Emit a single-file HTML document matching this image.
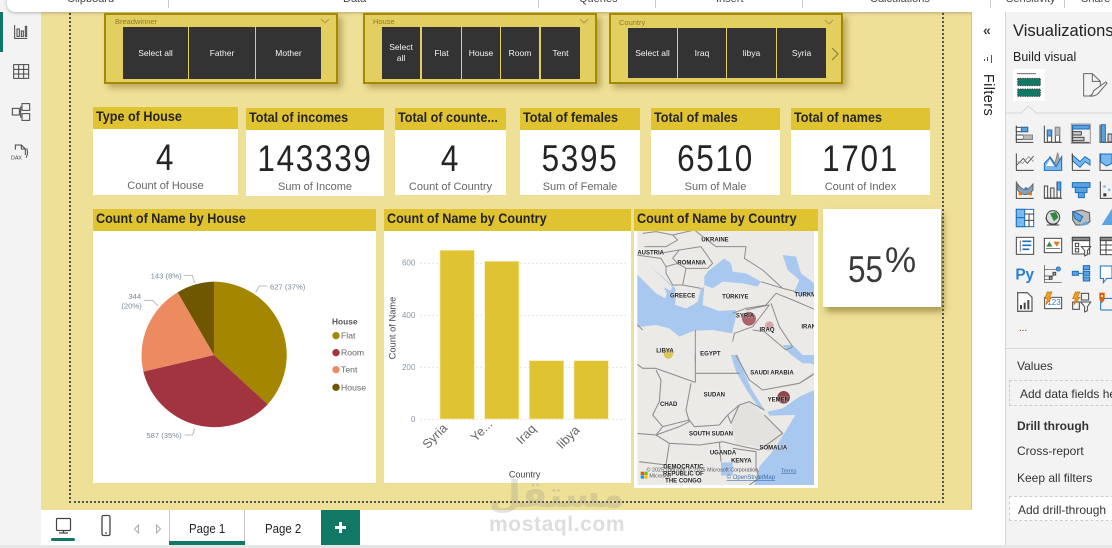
<!DOCTYPE html>
<html><head><meta charset="utf-8"><style>
html,body{margin:0;padding:0}
body{width:1112px;height:548px;overflow:hidden;position:relative;background:#fff;font-family:"Liberation Sans",sans-serif;color:#252423}
div,span,svg{position:absolute}
.t{white-space:nowrap}
.sl{background:#e3cf5f;border:2px solid #a58a00;box-sizing:border-box;box-shadow:4px 4px 6px rgba(120,100,30,.45)}
.st{font-size:7.5px;color:#8a7a30}
.b{background:#333;color:#f4f4f4;font-size:8.5px;display:flex;align-items:center;justify-content:center;text-align:center;line-height:11px;box-sizing:border-box}
.ch{background:#e0c331}
.ct{font-size:14px;font-weight:bold;left:3px;top:1px;white-space:nowrap;color:#252423;transform:scaleX(.9);transform-origin:0 50%}
.cb{background:#fff}
.v{font-size:37px;left:0;right:0;text-align:center;top:30px;color:#252423;letter-spacing:2px;line-height:42px;transform:scaleX(.85)}
.l{font-size:11px;left:0;right:0;text-align:center;color:#666;top:73px;line-height:13px;white-space:nowrap}
.p{font-size:12px;color:#333;white-space:nowrap}
</style></head><body>

<!-- canvas -->
<div style="left:41px;top:0;width:931px;height:510px;background:#efe097"></div>
<div style="left:69px;top:0;width:871px;height:501px;border:dotted #555;border-width:0 2px 2px 2px;box-sizing:content-box"></div>

<!-- left rail -->
<div style="left:0;top:0;width:41px;height:545px;background:#f3f3f3"></div>
<div style="left:0;top:12px;width:3px;height:40px;background:#117865"></div>
<svg style="left:0;top:15px" width="40" height="150" viewBox="0 0 120 450" fill="none" stroke="#444" stroke-width="3">
<path d="M44 30V70H82M51 42V64H58V42ZM64 48V64H70V48ZM76 34V64H80V34Z"/>
<path d="M41 149H86V190H41ZM41 163H86M41 177H86M56 149V190M71 149V190"/>
<path d="M37 280H58V300H37ZM66 266H89V286H66ZM66 296H89V316H66ZM58 290H62V276H66M62 290V306H66"/>
<path d="M46 404V390H64L76 402V420M64 390V402H76M80 400Q86 415 78 428"/>
<text x="33" y="434" font-size="16" stroke="none" fill="#444" font-family="Liberation Sans">DAX</text>
</svg>

<!-- ribbon -->
<div style="left:7px;top:-10px;width:1115px;height:22px;background:#fff;border-radius:8px;box-shadow:0 1px 3px rgba(0,0,0,.25)"></div>
<div class="t" style="left:67px;top:-7px;font-size:11px;line-height:13px;color:#444">Clipboard</div>
<div class="t" style="left:343px;top:-7px;font-size:11px;line-height:13px;color:#444">Data</div>
<div class="t" style="left:579px;top:-7px;font-size:11px;line-height:13px;color:#444">Queries</div>
<div class="t" style="left:716px;top:-7px;font-size:11px;line-height:13px;color:#444">Insert</div>
<div class="t" style="left:870px;top:-7px;font-size:11px;line-height:13px;color:#444">Calculations</div>
<div class="t" style="left:1006px;top:-7px;font-size:11px;line-height:13px;color:#444">Sensitivity</div>
<div class="t" style="left:1081px;top:-7px;font-size:11px;line-height:13px;color:#444">Share</div>
<div style="left:168px;top:0;width:1px;height:8px;background:#ccc"></div>
<div style="left:538px;top:0;width:1px;height:8px;background:#ccc"></div>
<div style="left:655px;top:0;width:1px;height:8px;background:#ccc"></div>
<div style="left:802px;top:0;width:1px;height:8px;background:#ccc"></div>
<div style="left:990px;top:0;width:1px;height:8px;background:#ccc"></div>
<div style="left:1064px;top:0;width:1px;height:8px;background:#ccc"></div>

<!-- slicers -->
<div class="sl" style="left:104px;top:13px;width:234px;height:71px"></div>
<div class="t st" style="left:115px;top:17px">Breadwinner</div>
<svg style="left:320px;top:18px" width="10" height="6" fill="none" stroke="#a99a50"><path d="M1 1L5 5L9 1"/></svg>
<div class="b" style="left:123px;top:27px;width:65px;height:52px">Select all</div>
<div class="b" style="left:189px;top:27px;width:66px;height:52px">Father</div>
<div class="b" style="left:256px;top:27px;width:65px;height:52px">Mother</div>

<div class="sl" style="left:363px;top:13px;width:234px;height:71px"></div>
<div class="t st" style="left:373px;top:17px">House</div>
<svg style="left:579px;top:18px" width="10" height="6" fill="none" stroke="#a99a50"><path d="M1 1L5 5L9 1"/></svg>
<div class="b" style="left:382px;top:27px;width:38px;height:52px">Select<br>all</div>
<div class="b" style="left:422px;top:27px;width:39px;height:52px">Flat</div>
<div class="b" style="left:462px;top:27px;width:38px;height:52px">House</div>
<div class="b" style="left:501px;top:27px;width:38px;height:52px">Room</div>
<div class="b" style="left:541px;top:27px;width:39px;height:52px">Tent</div>

<div class="sl" style="left:609px;top:13px;width:234px;height:71px"></div>
<div class="t st" style="left:619px;top:18px">Country</div>
<svg style="left:824px;top:19px" width="10" height="6" fill="none" stroke="#a99a50"><path d="M1 1L5 5L9 1"/></svg>
<div class="b" style="left:628px;top:28px;width:49px;height:50px">Select all</div>
<div class="b" style="left:678px;top:28px;width:48px;height:50px">Iraq</div>
<div class="b" style="left:727px;top:28px;width:49px;height:50px">libya</div>
<div class="b" style="left:777px;top:28px;width:49px;height:50px">Syria</div>
<svg style="left:830px;top:47px" width="10" height="14" fill="none" stroke="#8f8240" stroke-width="1.2"><path d="M2 1L8 7L2 13"/></svg>

<!-- cards -->
<div class="cb" style="left:93px;top:107px;width:145px;height:88px"><div class="ch" style="left:0;top:0;right:0;height:22px"><div class="ct">Type of House</div></div><div class="v">4</div><div class="l">Count of House</div></div>
<div class="cb" style="left:246px;top:108px;width:138px;height:88px"><div class="ch" style="left:0;top:0;right:0;height:22px"><div class="ct">Total of incomes</div></div><div class="v">143339</div><div class="l">Sum of Income</div></div>
<div class="cb" style="left:395px;top:108px;width:111px;height:87px"><div class="ch" style="left:0;top:0;right:0;height:22px"><div class="ct">Total of counte...</div></div><div class="v">4</div><div class="l">Count of Country</div></div>
<div class="cb" style="left:520px;top:108px;width:120px;height:87px"><div class="ch" style="left:0;top:0;right:0;height:22px"><div class="ct">Total of females</div></div><div class="v">5395</div><div class="l">Sum of Female</div></div>
<div class="cb" style="left:651px;top:108px;width:129px;height:87px"><div class="ch" style="left:0;top:0;right:0;height:22px"><div class="ct">Total of males</div></div><div class="v">6510</div><div class="l">Sum of Male</div></div>
<div class="cb" style="left:791px;top:108px;width:139px;height:87px"><div class="ch" style="left:0;top:0;right:0;height:22px"><div class="ct">Total of names</div></div><div class="v">1701</div><div class="l">Count of Index</div></div>

<!-- pie card -->
<div class="cb" style="left:93px;top:209px;width:283px;height:274px"><div class="ch" style="left:0;top:0;right:0;height:22px"><div class="ct">Count of Name by House</div></div></div>
<svg style="left:90px;top:205px" width="300" height="285" viewBox="0 0 900 855" font-family="Liberation Sans">
<path d="M372 450V230A220 220 0 0 1 533 598Z" fill="#a58600"/>
<path d="M372 450L533 598A220 220 0 0 1 160 500Z" fill="#a23440"/>
<path d="M372 450L160 500A220 220 0 0 1 263 262Z" fill="#ec8a60"/>
<path d="M372 450L263 262A220 220 0 0 1 372 230Z" fill="#6f5700"/>
<g fill="none" stroke="#bbb" stroke-width="3">
<path d="M497 262L508 243H532M282 211H307L314 234M162 286H188L204 303M284 690H308L314 670"/></g>
<g fill="#7b8a96" font-size="23">
<text x="540" y="254">627 (37%)</text><text x="182" y="221">143 (8%)</text><text x="115" y="282">344</text><text x="94" y="311">(20%)</text><text x="169" y="699">587 (35%)</text></g>
<text x="726" y="358" font-size="25" font-weight="bold" fill="#555">House</text>
<circle cx="738" cy="392" r="11" fill="#a58600"/><circle cx="738" cy="443" r="11" fill="#a23440"/><circle cx="738" cy="494" r="11" fill="#ec8a60"/><circle cx="738" cy="547" r="11" fill="#6f5700"/>
<g font-size="26" fill="#666"><text x="753" y="401">Flat</text><text x="753" y="452">Room</text><text x="753" y="503">Tent</text><text x="753" y="556">House</text></g>
</svg>

<!-- bar card -->
<div class="cb" style="left:384px;top:209px;width:247px;height:274px"><div class="ch" style="left:0;top:0;right:0;height:22px"><div class="ct">Count of Name by Country</div></div></div>
<svg style="left:380px;top:205px" width="255" height="285" viewBox="0 0 765 855" font-family="Liberation Sans">
<g stroke="#ccc" stroke-width="3" stroke-dasharray="3 9"><path d="M122 175H745M122 331H745M122 487H745M122 643H745"/></g>
<g fill="#e0c331" stroke="#f3e9ad" stroke-width="2"><rect x="180" y="136" width="103" height="506"/><rect x="314" y="169" width="103" height="473"/><rect x="448" y="467" width="103" height="175"/><rect x="582" y="467" width="103" height="175"/></g>
<g fill="#8a96a0" font-size="24" text-anchor="end"><text x="106" y="182">600</text><text x="106" y="339">400</text><text x="106" y="495">200</text><text x="106" y="651">0</text></g>
<text transform="translate(46 369) rotate(-90)" text-anchor="middle" font-size="28" fill="#444">Count of Name</text>
<g fill="#666" font-size="38"><text transform="translate(143 733) rotate(-45)">Syria</text><text transform="translate(287 712) rotate(-45)">Ye...</text><text transform="translate(424 720) rotate(-45)">Iraq</text><text transform="translate(546 733) rotate(-45)">libya</text></g>
<text x="434" y="818" text-anchor="middle" font-size="27" fill="#444">Country</text>
</svg>

<!-- map card -->
<div class="cb" style="left:634px;top:209px;width:184px;height:279px"><div class="ch" style="left:0;top:0;right:0;height:22px"><div class="ct">Count of Name by Country</div></div></div>
<svg style="left:630px;top:205px;filter:blur(.3px)" width="320" height="285" viewBox="0 0 960 855" font-family="Liberation Sans">
<defs><clipPath id="m"><rect x="22" y="78" width="530" height="762"/></clipPath></defs>
<g clip-path="url(#m)">
<rect x="22" y="78" width="530" height="762" fill="#ebeae7"/>
<!-- north half -->
<g transform="translate(18 75)">
<g fill="#a9c8ef">
<path d="M0 130L30 160L60 190L88 205L92 190L84 172L105 182L108 170L60 125L45 110L118 175L118 225L150 235L170 225L185 215L195 175L205 170L200 225L250 243L300 240L300 260L288 310L230 300L175 302L130 320L100 295L60 285L0 292Z"/>
<path d="M205 140L215 125L265 85L285 100L290 125L330 130L375 155L365 170L320 160L260 155L230 175L205 165Z"/>
<path d="M440 75L480 80L495 130L535 160V190L500 200L475 185L490 150L455 120Z"/>
<path d="M440 345L470 345L500 375L540 400H500L460 370Z"/>
</g>
<g fill="none" stroke="#8e8e8c" stroke-width="3" stroke-linejoin="round">
<path d="M20 10L60 5L110 15L175 0M25 50L90 50L125 30L110 15M110 85L130 60L195 50L230 100L215 115L150 115L125 100ZM90 110L125 100L150 115L140 165L110 165L90 130ZM70 70L130 60M0 75L75 85L90 110M175 0L240 50L330 50L325 85L380 120L440 175L480 185M375 155L440 175"/>
<path d="M290 250L330 235L390 225L420 190M330 240L400 225L350 290L295 310L290 335M350 300L385 305L450 360L470 350M405 220L430 290L470 350M178 300V395M0 280L20 300M420 190L470 210L540 240M140 165L195 175"/>
</g>
</g>
<!-- south half -->
<g transform="translate(18 450)">
<g fill="#a9c8ef">
<path d="M285 0H305L320 40L345 100L388 168L370 160L335 110L300 50Z"/>
<path d="M395 170L440 160L490 125L535 105V390H355L370 335L405 295L445 235L478 180L400 182Z"/>
<path d="M470 0L535 30V0Z"/>
<path d="M255 322H290L290 360L255 362Z"/>
</g>
<path d="M300 150L340 140L385 180L445 235L400 290L350 270L300 270L285 205Z" fill="#e3e2df"/>
<g fill="none" stroke="#8e8e8c" stroke-width="3.200" stroke-linejoin="round">
<path d="M178 0V82M178 55H310M60 40L178 82M0 25L20 40L60 40M60 45L75 75L70 140L50 180L80 215L60 240M165 85L150 165L160 200M50 180L80 215L160 195L175 215L250 210L275 180L285 205L310 150L340 140L385 165"/>
<path d="M275 180L310 150M385 180L440 235L370 285L300 270M160 200L130 215L60 240L100 265L190 270L260 260L300 270M290 280L360 290L360 340L370 370L340 390M255 320L250 260M100 265L90 330L10 320M0 235L60 240"/>
<path d="M340 75L380 105L490 85L530 60M490 85L535 55M300 0L340 75"/>
</g>
</g>
<circle cx="357" cy="341" r="20" fill="#9c3640" fill-opacity=".75" stroke="#8c2a34"/>
<circle cx="418" cy="362" r="13" fill="#c8737c" fill-opacity=".6"/>
<circle cx="115" cy="447" r="13" fill="#d9bb33" fill-opacity=".8" stroke="#b79f24"/>
<circle cx="461" cy="577" r="19" fill="#7e2a30" fill-opacity=".85"/>
<g font-size="18" fill="#222" font-weight="bold" text-anchor="middle" stroke="#fff" stroke-width="3" stroke-opacity=".35" paint-order="stroke">
<text x="255" y="109">UKRAINE</text><text x="62" y="149">AUSTRIA</text><text x="185" y="178">ROMANIA</text><text x="158" y="277">GREECE</text><text x="316" y="281">TÜRKIYE</text><text x="526" y="275">TURKM</text><text x="345" y="337">SYRIA</text><text x="411" y="379">IRAQ</text><text x="536" y="371">IRAN</text><text x="105" y="443">LIBYA</text><text x="241" y="452">EGYPT</text><text x="426" y="509">SAUDI ARABIA</text><text x="445" y="589">YEMEN</text><text x="116" y="603">CHAD</text><text x="253" y="575">SUDAN</text><text x="243" y="692">SOUTH SUDAN</text><text x="430" y="734">SOMALIA</text><text x="279" y="749">UGANDA</text><text x="334" y="773">KENYA</text><text x="160" y="790">DEMOCRATIC</text><text x="160" y="812">REPUBLIC OF</text><text x="160" y="833">THE CONGO</text></g>
<rect x="32" y="800" width="10" height="10" fill="#f25022"/><rect x="43" y="800" width="10" height="10" fill="#7fba00"/><rect x="32" y="811" width="10" height="10" fill="#00a4ef"/><rect x="43" y="811" width="10" height="10" fill="#ffb900"/>
<text x="50" y="800" font-size="16" fill="#555">© 2025 TomTom, © 2025 Microsoft Corporation,</text><text x="453" y="802" font-size="17" fill="#3a6fb0" text-decoration="underline">Terms</text>
<text x="58" y="817" font-size="16" fill="#555">Microsoft</text><text x="290" y="822" font-size="18" fill="#3a6fb0" text-decoration="underline">© OpenStreetMap</text>
</g></svg>

<!-- 55% -->
<div class="cb" style="left:823px;top:209px;width:118px;height:98px;box-shadow:3px 5px 6px rgba(110,90,20,.5)"></div>
<div class="t" style="left:848px;top:246px;font-size:37px;line-height:48px;color:#3a3a3a;transform:scaleX(.85);transform-origin:0 50%">55</div>
<div class="t" style="left:885px;top:241px;font-size:35px;line-height:40px;color:#3a3a3a">%</div>

<!-- tab bar -->
<div style="left:41px;top:510px;width:964px;height:35px;background:#fff"></div>
<svg style="left:50px;top:513px" width="70" height="28" fill="none" stroke="#444" stroke-width="1.2">
<rect x="6.5" y="5.5" width="14" height="12" rx="1"/><path d="M9 20H18M13.500 17.500V20"/>
<rect x="52" y="2.500" width="8" height="20" rx="1.500" stroke-width="1.300"/><path d="M55 20H57"/>
</svg>
<div style="left:51px;top:538px;width:24px;height:3px;background:#117865;border-radius:2px"></div>
<svg style="left:132px;top:522px" width="32" height="14" fill="none" stroke="#aaa"><path d="M6.500 3L2.500 7L6.500 11ZM24.500 3L28.500 7L24.500 11Z"/></svg>
<div style="left:169px;top:510px;width:76px;height:35px;border:solid #c8c8c8;border-width:0 1px;box-sizing:border-box"></div>
<div style="left:169px;top:541px;width:76px;height:4px;background:#117865"></div>
<div class="t" style="left:189px;top:521px;font-size:13px;line-height:15px;color:#222;transform:scaleX(.88);transform-origin:0 50%">Page 1</div>
<div class="t" style="left:265px;top:521px;font-size:13px;line-height:15px;color:#222;transform:scaleX(.88);transform-origin:0 50%">Page 2</div>
<div style="left:321px;top:510px;width:39px;height:35px;background:#117865"></div>
<div style="left:335px;top:526px;width:11px;height:3px;background:#fff"></div>
<div style="left:339px;top:522px;width:3px;height:11px;background:#fff"></div>

<!-- watermark -->
<div class="t" style="left:489px;top:473px;font-size:37px;line-height:44px;font-weight:bold;color:rgba(140,140,140,.24);font-family:'DejaVu Sans',sans-serif">مستقل</div>
<div class="t" style="left:489px;top:512px;font-size:21px;line-height:26px;letter-spacing:.6px;color:rgba(150,150,150,.32);font-weight:bold">mostaql.com</div>
<div style="left:0;top:545px;width:1112px;height:3px;background:#e6e6e6"></div>

<!-- filters pane -->
<div style="left:972px;top:12px;width:33px;height:533px;background:#fff"></div>
<div style="left:971px;top:12px;width:1px;height:498px;background:#d9c77a"></div>
<div class="t" style="left:983px;top:22px;font-size:14px;line-height:16px;color:#444;font-weight:bold">«</div>
<svg style="left:982px;top:54px" width="12" height="10" stroke="#555" stroke-width="1"><path d="M2.500 5V7M5.500 3V7M9.500 1V9"/></svg>
<div class="t" style="left:965px;top:87px;font-size:14.500px;line-height:16px;width:46px;text-align:center;transform:rotate(90deg);color:#222;letter-spacing:.4px">Filters</div>

<!-- viz pane -->
<div style="left:1005px;top:12px;width:107px;height:533px;background:#f3f3f3;border-left:1px solid #d5d5d5;box-sizing:border-box"></div>
<div class="t" style="left:1013px;top:22px;font-size:16.500px;line-height:18px;color:#222">Visualizations</div>
<div class="t" style="left:1013px;top:50px;font-size:12.500px;line-height:15px;color:#222">Build visual</div>
<div style="left:1013px;top:69px;width:32px;height:32px;background:#fff"></div>
<svg style="left:1005px;top:60px" width="107" height="60" viewBox="0 0 321 180">
<path d="M36 41H93" stroke="#555" stroke-width="2.500"/>
<rect x="38" y="55" width="68" height="22" fill="#117865" stroke="#444" stroke-width="3" stroke-dasharray="4 3"/>
<rect x="38" y="87" width="68" height="22" fill="#117865" stroke="#444" stroke-width="3" stroke-dasharray="4 3"/>
<path d="M258 108H236V41H262L286 64V76M262 41V64H286M252 108Q262 108 266 92L302 66L306 70L278 102Q268 110 252 108Z" fill="none" stroke="#666" stroke-width="3"/>
<path d="M0 159H48L70 138L94 159H321" fill="none" stroke="#d5d5d5" stroke-width="3"/>
</svg>

<svg style="left:970px;top:110px" width="142" height="230" viewBox="0 0 426 690" fill="none" stroke="#444" stroke-width="3">
<!-- row1 -->
<path d="M139 47V97H190"/><rect x="139" y="52" width="34" height="13" fill="#fff"/><rect x="154" y="52" width="19" height="13" fill="#5ba3e0" stroke="#1a6fbf"/><rect x="139" y="75" width="48" height="13" fill="#fff"/><rect x="160" y="75" width="27" height="13" fill="#bbb" stroke="#888"/>
<path d="M223 47V97H275"/><rect x="232" y="60" width="13" height="36" fill="#fff"/><rect x="232" y="60" width="13" height="18" fill="#5ba3e0" stroke="#1a6fbf"/><rect x="256" y="52" width="13" height="44" fill="#fff"/><rect x="256" y="52" width="13" height="24" fill="#bbb" stroke="#888"/>
<rect x="304" y="42" width="57" height="58" fill="#eee" stroke="#999"/><path d="M308 45V97H358"/><rect x="308" y="46" width="50" height="11" fill="#5ba3e0" stroke="#1a6fbf"/><rect x="308" y="65" width="26" height="10" fill="#ccc"/><rect x="308" y="82" width="34" height="10" fill="#ccc"/>
<path d="M390 44V97H426"/><rect x="394" y="44" width="12" height="52" fill="#5ba3e0" stroke="#1a6fbf"/><rect x="414" y="72" width="12" height="24" fill="#ccc"/>
<!-- row2 -->
<path d="M139 130V181H191"/><path d="M141 165L160 145L172 160L191 138" stroke-width="2.500"/><path d="M141 155L158 160L176 140L191 155" stroke="#777" stroke-width="2"/>
<path d="M223 180L240 140L255 160L263 128L275 180Z" fill="#aaa" stroke="#888"/><path d="M223 181V160L240 142L258 170L275 140V181Z" fill="#7bb8ec" stroke="#1a6fbf"/><path d="M228 168L240 148L252 168Z" fill="#fff" stroke="none"/>
<path d="M307 135L330 155L345 140L360 150V165L345 155L330 172L307 152Z" fill="#7bb8ec" stroke="#1a6fbf"/><path d="M307 181H360"/><path d="M307 130V181"/>
<path d="M390 130V181H426"/><path d="M392 132H426V160L410 168L392 156Z" fill="#7bb8ec" stroke="#1a6fbf"/>
<!-- row3 -->
<path d="M139 214V265H191"/><path d="M143 222Q165 255 189 222V240Q165 268 143 240Z" fill="#8aa0b8" stroke="#666"/><rect x="146" y="246" width="10" height="10" fill="#e07a1f" stroke="none"/><rect x="176" y="246" width="10" height="10" fill="#e07a1f" stroke="none"/><rect x="164" y="232" width="8" height="8" fill="#2b7fd1" stroke="none"/>
<path d="M223 264V228H233V264H242V234H252V264H261V216H272V264ZM222 265H276"/><path d="M262 216H272V240H262Z" fill="#5ba3e0" stroke="#1a6fbf"/>
<path d="M307 218H360V232H307ZM316 232H351V248H316ZM325 248H343V263H325Z" fill="#5ba3e0" stroke="#1a6fbf"/>
<path d="M391 214V265H426"/><rect x="400" y="226" width="7" height="7" fill="#7bb8ec" stroke="none"/><rect x="414" y="236" width="7" height="7" fill="#7bb8ec" stroke="none"/><rect x="400" y="250" width="9" height="9" fill="#333" stroke="none"/>
<!-- row4 -->
<rect x="139" y="298" width="52" height="52" fill="#fff" stroke="#1a6fbf"/><rect x="139" y="298" width="25" height="25" fill="#7bb8ec" stroke="#1a6fbf"/><rect x="139" y="323" width="25" height="27" fill="#7bb8ec" stroke="#1a6fbf"/><path d="M164 312H191M177 312V350M164 331H191" stroke="#444"/>
<circle cx="249" cy="322" r="20" fill="#ddd"/><path d="M240 310L258 306L265 322L252 334L246 322Z" fill="#2e8b3e" stroke="none"/><path d="M230 345H268M249 342V346M228 322A22 22 0 0 0 262 340"/>
<path d="M308 305L335 300L358 308L360 335L340 345L318 345L308 330Z" fill="#bbb" stroke="#555"/><path d="M308 305L322 310L338 320L330 335L314 325Z" fill="#5ba3e0" stroke="#1a6fbf"/><path d="M330 345L348 335L358 342L340 347Z" fill="#5ba3e0" stroke="none"/>
<path d="M395 345L426 296V345Z" fill="#5ba3e0" stroke="none"/>
<!-- row5 -->
<rect x="139" y="382" width="52" height="51" fill="#fff"/><path d="M151 392V425" stroke="#777"/><path d="M157 394H184M157 406H184M157 418H178" stroke="#1a6fbf" stroke-width="5"/>
<rect x="223" y="385" width="52" height="43" fill="#fff"/><path d="M229 410L238 395L247 410Z" fill="#2e8b3e" stroke="none"/><path d="M250 395H270L260 410Z" fill="#e07a1f" stroke="none"/><path d="M228 416H270" stroke-width="2"/>
<rect x="307" y="382" width="52" height="50" fill="#fff"/><rect x="307" y="382" width="52" height="10" fill="#888"/><rect x="316" y="400" width="10" height="10"/><rect x="316" y="416" width="10" height="10"/><path d="M334 410H362L352 422V434L344 438V422Z" fill="#fff"/>
<rect x="391" y="382" width="50" height="52" fill="#fff"/><rect x="391" y="382" width="50" height="10" fill="#888"/><path d="M391 405H426M391 420H426M408 392V434"/>
<!-- row6 -->
<text x="136" y="508" font-size="46" font-weight="bold" fill="#2b7fd1" stroke="none" font-family="Liberation Sans">Py</text>
<path d="M223 465V518M223 518H275M223 478H262M223 498H250M223 508H240" stroke-width="2"/><circle cx="265" cy="477" r="6" fill="#5ba3e0" stroke="#1a6fbf"/><rect x="249" y="487" width="8" height="8" fill="#aaa"/><rect x="238" y="500" width="8" height="8" fill="#aaa"/>
<path d="M325 490H340M340 474V508" stroke="#1a6fbf"/><rect x="307" y="484" width="18" height="12" fill="#5ba3e0" stroke="#1a6fbf"/><rect x="340" y="467" width="19" height="12" fill="#5ba3e0" stroke="#1a6fbf"/><rect x="340" y="484" width="19" height="12" fill="#5ba3e0" stroke="#1a6fbf"/><rect x="340" y="501" width="19" height="12" fill="#5ba3e0" stroke="#1a6fbf"/>
<path d="M391 468H426V505H410L400 518V505H391Z" fill="#fff" stroke="#1a6fbf"/>
<!-- row7 -->
<path d="M143 548H172L186 562V604H143Z" fill="#fff" stroke="#666" stroke-width="4"/><rect x="150" y="585" width="6" height="13" fill="#444" stroke="none"/><rect x="161" y="578" width="6" height="20" fill="#444" stroke="none"/><rect x="172" y="570" width="6" height="28" fill="#444" stroke="none"/>
<rect x="224" y="562" width="51" height="34" fill="#fff"/><text x="232" y="585" font-size="24" fill="#2b7fd1" stroke="none" font-family="Liberation Sans">123</text><path d="M232 546H246L238 562H246L228 584L232 566H224Z" fill="#f0a020" stroke="#c46a10" stroke-width="2"/>
<rect x="334" y="550" width="22" height="20"/><rect x="308" y="576" width="20" height="22"/><path d="M332 576H362L352 590V602L344 606V590Z" fill="#fff"/><path d="M316 546H330L322 562H330L312 584L316 566H308Z" fill="#f0a020" stroke="#c46a10" stroke-width="2"/>
<path d="M392 600V565H426M392 600H426" stroke="#1a6fbf"/><path d="M388 548H404V568L396 580L388 568Z" fill="#d8640f" stroke="none"/><circle cx="396" cy="558" r="3" fill="#fff" stroke="none"/>
<text x="148" y="663" font-size="22" font-weight="bold" fill="#7a4a1a" stroke="none" letter-spacing="2" font-family="Liberation Sans">...</text>
</svg>

<div style="left:1006px;top:348px;width:106px;height:1px;background:#d8d8d8"></div>
<div class="p" style="left:1017px;top:359px">Values</div>
<div style="left:1009px;top:380px;width:120px;height:26px;border:1px dashed #ccc;box-sizing:border-box"></div>
<div class="p" style="left:1020px;top:387px">Add data fields here</div>
<div class="p" style="left:1017px;top:419px;font-weight:bold">Drill through</div>
<div class="p" style="left:1017px;top:444px">Cross-report</div>
<div class="p" style="left:1017px;top:471px">Keep all filters</div>
<div style="left:1009px;top:496px;width:120px;height:25px;border:1px dashed #ccc;box-sizing:border-box;background:#fff"></div>
<div class="p" style="left:1018px;top:503px">Add drill-through</div>
</body></html>
